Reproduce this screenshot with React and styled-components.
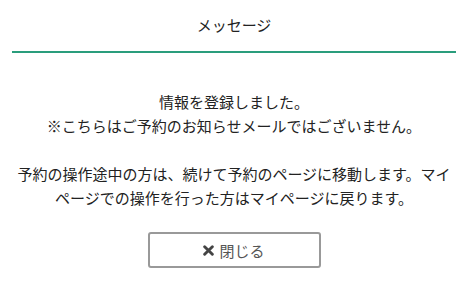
import React from 'react';
import styled, { createGlobalStyle } from 'styled-components';

const GlobalStyle = createGlobalStyle`
  html, body {
    margin: 0;
    padding: 0;
    background: #fff;
  }
  body {
    font-family: 'Noto Sans CJK JP', 'Noto Sans', sans-serif;
    color: #222;
  }
`;

const Modal = styled.div`
  width: 468px;
  height: 282px;
  box-sizing: border-box;
  padding: 0 12px;
  display: flex;
  flex-direction: column;
  align-items: stretch;
`;

const Header = styled.div`
  height: 53px;
  box-sizing: border-box;
  border-bottom: 2px solid #2a9d7c;
  display: flex;
  align-items: center;
  justify-content: center;
  padding-bottom: 2px;
  font-size: 15px;
  color: #222;
`;

const Body = styled.div`
  padding-top: 37px;
  display: flex;
  flex-direction: column;
  align-items: center;
  gap: 24px;
`;

const Paragraph = styled.p`
  margin: 0;
  font-size: 15px;
  line-height: 24px;
  text-align: center;
  color: #222;
  white-space: nowrap;
`;

const Footer = styled.div`
  display: flex;
  justify-content: center;
  padding-top: 22px;
`;

const CloseButton = styled.button`
  width: 173px;
  height: 36px;
  box-sizing: border-box;
  border: 2px solid #999;
  border-radius: 3px;
  background: #fff;
  color: #555;
  font-family: inherit;
  font-size: 15px;
  display: flex;
  align-items: center;
  justify-content: center;
  gap: 5px;
  cursor: pointer;
  padding: 0;
`;

const CrossIcon = () => (
  <svg width="11" height="11" viewBox="0 0 10 10">
    <path d="M1.5 1.5 L8.5 8.5 M8.5 1.5 L1.5 8.5" stroke="#444" strokeWidth="2.6" strokeLinecap="round" />
  </svg>
);

const App = () => {
  return (
    <>
      <GlobalStyle />
      <Modal>
        <Header>メッセージ</Header>
        <Body>
          <Paragraph>
            情報を登録しました。
            <br />
            ※こちらはご予約のお知らせメールではございません。
          </Paragraph>
          <Paragraph>
            予約の操作途中の方は、続けて予約のページに移動します。マイ
            <br />
            ページでの操作を行った方はマイページに戻ります。
          </Paragraph>
        </Body>
        <Footer>
          <CloseButton>
            <CrossIcon />
            閉じる
          </CloseButton>
        </Footer>
      </Modal>
    </>
  );
};

export default App;
